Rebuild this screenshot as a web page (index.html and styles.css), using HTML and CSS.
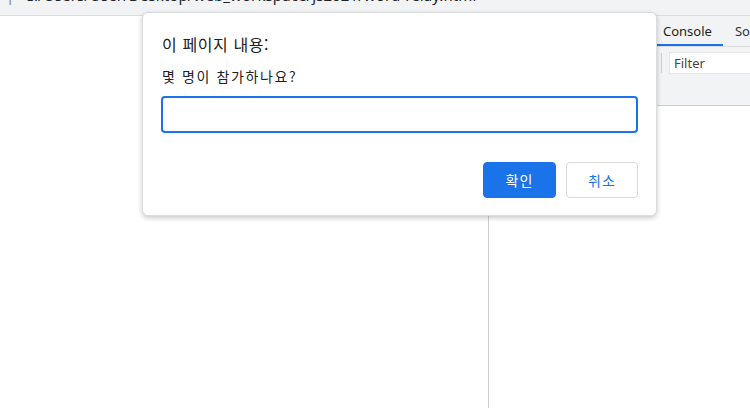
FILE: index.html
```html
<!DOCTYPE html>
<html lang="ko">
<head>
<meta charset="utf-8">
<title>word-relay</title>
<link rel="stylesheet" href="styles.css">
</head>
<body>
<div class="topbar"><div class="url"><span class="sep">|</span>C:/Users/User/Desktop/web_workspace/js2021/word-relay.html</div></div>
<div class="main">
  <div class="page"></div>
  <div class="devtools">
    <div class="tabs">
      <div class="tab">Elements</div>
      <div class="tab active">Console</div>
      <div class="tab next">Sources</div>
    </div>
    <div class="toolbar">
      <div class="vsep"></div>
      <div class="filter">Filter</div>
    </div>
    <div class="console"></div>
  </div>
</div>
<div class="dialog">
  <div class="title">이 페이지 내용:</div>
  <div class="msg">몇 명이 참가하나요?</div>
  <div class="input"></div>
  <div class="buttons">
    <button class="btn primary">확인</button>
    <button class="btn secondary">취소</button>
  </div>
</div>
</body>
</html>
```
FILE: styles.css
```css
html, body {
  margin: 0;
  padding: 0;
}
body {
  width: 750px;
  height: 408px;
  overflow: hidden;
  position: relative;
  background: #fff;
  font-family: "Noto Sans", "Noto Sans CJK KR", sans-serif;
}
.topbar {
  height: 15px;
  background: #f1f3f4;
  border-bottom: 1px solid #dadce0;
  overflow: hidden;
}
.url {
  margin-top: -15px;
  padding-left: 6px;
  font-size: 15px;
  line-height: 20px;
  letter-spacing: 0.1px;
  color: #202124;
  white-space: nowrap;
}
.url .sep {
  color: #80868b;
  margin-right: 10px;
}
.main {
  display: flex;
  height: 392px;
}
.page {
  flex: 0 0 488px;
  background: #fff;
}
.devtools {
  flex: 1;
  border-left: 1px solid #cbcdd1;
  display: flex;
  flex-direction: column;
  min-width: 0;
}
.tabs {
  height: 30px;
  background: #f1f3f4;
  display: flex;
  padding-left: 98px;
  white-space: nowrap;
  overflow: hidden;
}
.tab {
  padding: 0 11px 0 6px;
  font-size: 13px;
  line-height: 30px;
  color: #333;
  box-sizing: border-box;
  height: 30px;
}
.tab:first-child {
  width: 70px;
}
.tab.active {
  width: 69px;
  border-bottom: 2px solid #1a73e8;
  color: #1f1f1f;
}
.tab.next {
  padding-left: 12px;
}
.toolbar {
  height: 60px;
  background: #f1f3f4;
  border-top: 1px solid #dadce0;
  border-bottom: 1px solid #cbcdd1;
  display: flex;
  align-items: flex-start;
  padding-top: 5px;
  padding-left: 172px;
  box-sizing: border-box;
}
.vsep {
  width: 1px;
  height: 20px;
  background: #cbcdd1;
  margin-right: 7px;
  margin-top: 1px;
}
.filter {
  flex: 1;
  height: 22px;
  background: #fff;
  border: 1px solid #e6e6e6;
  border-right: none;
  box-sizing: border-box;
  font-size: 13px;
  line-height: 20px;
  padding-left: 4px;
  color: #444;
}
.console {
  flex: 1;
  background: #fff;
}
.dialog {
  position: absolute;
  left: 142px;
  top: 12px;
  width: 515px;
  height: 204px;
  box-sizing: border-box;
  background: #fff;
  border: 1px solid #dadce0;
  border-radius: 6px;
  box-shadow: 0 2px 5px rgba(0, 0, 0, 0.22);
  padding: 19px 18px 17px 18px;
  font-family: "Noto Sans CJK KR", "Noto Sans", sans-serif;
  display: flex;
  flex-direction: column;
}
.title {
  font-size: 16px;
  line-height: 24px;
  letter-spacing: 0.6px;
  color: #202124;
  padding-left: 1px;
}
.msg {
  margin-top: 10px;
  font-size: 14px;
  line-height: 20px;
  letter-spacing: 1.6px;
  color: #202124;
  padding-left: 1px;
}
.input {
  margin-top: 10px;
  height: 37px;
  border: 2px solid #1a73e8;
  border-radius: 4px;
  box-sizing: border-box;
}
.buttons {
  margin-top: 29px;
  display: flex;
  justify-content: flex-end;
  gap: 10px;
}
.btn {
  height: 36px;
  border-radius: 4px;
  font-family: "Noto Sans CJK KR", sans-serif;
  font-size: 14px;
  letter-spacing: 1px;
  box-sizing: border-box;
  padding: 0;
  cursor: pointer;
}
.primary {
  width: 73px;
  background: #1a73e8;
  color: #fff;
  border: 1px solid #1a73e8;
}
.secondary {
  width: 72px;
  background: #fff;
  color: #1a73e8;
  border: 1px solid #dadce0;
}
```
